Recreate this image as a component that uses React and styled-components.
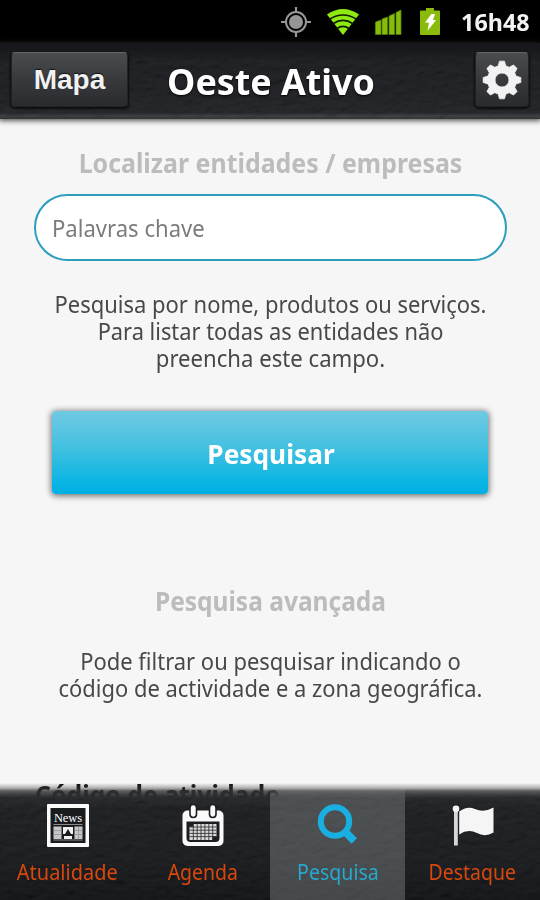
import React from 'react';
import styled, { createGlobalStyle } from 'styled-components';

const GlobalStyle = createGlobalStyle`
  * { box-sizing: border-box; }
  body { margin: 0; background: #f6f6f6; }
  button, input { font: inherit; margin: 0; }
`;

const Screen = styled.div`
  width: 540px;
  height: 900px;
  display: flex;
  flex-direction: column;
  overflow: hidden;
  background: #f6f6f6;
  font-family: 'Noto Sans', 'Open Sans', sans-serif;
`;

/* A single line of text with its glyphs condensed horizontally */
const Line = styled.span`
  display: block;
  white-space: nowrap;
  transform: scaleX(${(p) => p.$fit || 1});
  transform-origin: ${(p) => p.$origin || 'center'};
`;

const StatusBar = styled.div`
  flex: none;
  height: 43px;
  display: flex;
  align-items: center;
  justify-content: flex-end;
  padding: 0 10px 0 0;
  background: #000;
`;

const StatusIcons = styled.div`
  display: flex;
  align-items: center;
  margin-right: 15px;
`;

const Clock = styled.div`
  color: #f4f4f4;
  font-size: 24px;
  font-weight: 700;
  line-height: 44px;
`;

const Header = styled.header`
  position: relative;
  z-index: 2;
  flex: none;
  height: 76px;
  display: grid;
  grid-template-columns: 117px 1fr 54px;
  align-items: start;
  padding: 9px 11px 0;
  background: linear-gradient(#17181c, #1b1c20 70%, #1f2024 92%, #38393b 96%, #2c2d2f);
  box-shadow: 0 1px 5px 1px rgba(50, 50, 45, 0.8);
`;

const Leather = styled.svg`
  position: absolute;
  inset: 0;
  width: 100%;
  height: 100%;
  opacity: ${(p) => p.$strength};
  pointer-events: none;
  mask-image: linear-gradient(transparent 5px, #000 18px);
`;

const HeaderButton = styled.button`
  position: relative;
  height: 55px;
  display: flex;
  align-items: center;
  justify-content: center;
  padding: 0;
  border: 1px solid #222326;
  border-top-color: #646669;
  border-radius: 4px;
  background: linear-gradient(#4b4c50, #38393d 50%, #2a2b2f);
  box-shadow: 0 1px 2px 1px rgba(0, 0, 0, 0.65);
  color: #f1f1f1;
  font-family: 'Liberation Sans', Arial, sans-serif;
  font-size: 28px;
  font-weight: 700;
  line-height: 52px;
  text-shadow: 0 -1px 1px #111;
`;

const Title = styled.h1`
  position: relative;
  margin: 0;
  padding-right: 61px;
  color: #fff;
  font-size: 36px;
  font-weight: 700;
  line-height: 59px;
  text-align: center;
  text-shadow: 0 1px 2px #000;
`;

const Main = styled.main`
  flex: 1;
  min-height: 0;
  overflow: hidden;
  padding-top: 24px;
  text-align: center;
`;

const SectionTitle = styled.h2`
  margin: 0;
  padding-left: 1px;
  color: ${(p) => (p.$dark ? '#111' : '#bbbdbb')};
  font-size: 26px;
  font-weight: 700;
  line-height: 40px;
`;

const SearchField = styled.label`
  display: flex;
  align-items: center;
  height: 67px;
  margin: 11px 33px 0 34px;
  padding: 0 16px;
  border: 2px solid #2b9dbd;
  border-radius: 34px;
  background: #fff;
  color: #7c7c7c;
  font-size: 24px;
  line-height: 64px;
`;

const Hint = styled.p`
  margin: ${(p) => p.$gap}px 0 0;
  padding-left: 1px;
  color: #484848;
  font-size: 24px;
  line-height: 27px;
`;

const SearchButton = styled.button`
  display: block;
  width: 436px;
  height: 83px;
  margin: 40px auto 0 52px;
  padding: 0 0 0 2px;
  border: 0;
  border-radius: 4px;
  background: linear-gradient(#70c9e3, #42c0e0 45%, #07b4e3 88%, #02afe4);
  box-shadow: 0 1px 6px 1px rgba(0, 0, 0, 0.55);
  color: #fff;
  font-size: 26px;
  font-weight: 700;
  line-height: 87px;
`;

const AdvancedTitle = styled(SectionTitle)`
  margin-top: 87px;
`;

const ActivityTitle = styled(SectionTitle)`
  margin: 74px 0 0 34px;
  text-align: left;
`;

/* Overlaps the end of the scrolled content with a soft translucent edge */
const TabBar = styled.nav`
  position: relative;
  z-index: 2;
  flex: none;
  height: 117px;
  margin-top: -14px;
  display: grid;
  grid-template-columns: repeat(4, 135px);
  background: linear-gradient(rgba(20,20,20,0), rgba(70,70,70,.4) 5px, rgba(50,51,54,.8) 8px, rgba(41,42,45,.93) 12px, #232427 15px, #1a1b1e 25px, #17181b 65%, #0f1013);
`;

const Tab = styled.button`
  position: relative;
  display: flex;
  flex-direction: column;
  align-items: center;
  padding: 21px 0 0;
  border: 0;
  background: ${(p) =>
    p.$active
      ? 'linear-gradient(rgba(215,228,225,0) 4px, rgba(215,228,225,.2) 14px, rgba(215,228,225,.235) 28px)'
      : 'none'};
  color: ${(p) => (p.$active ? '#27a8cf' : '#d8480c')};
  font-size: 21.5px;
  line-height: 32px;

  svg { display: block; margin-bottom: 9px; }
`;

const LeatherTexture = ({ id, strength }) => (
  <Leather $strength={strength} aria-hidden="true">
    <filter id={id} x="0" y="0" width="100%" height="100%">
      <feTurbulence type="fractalNoise" baseFrequency="0.09 0.15" numOctaves="2" seed="8" />
      <feDiffuseLighting lightingColor="#fff" surfaceScale="2">
        <feDistantLight azimuth="65" elevation="30" />
      </feDiffuseLighting>
    </filter>
    <rect width="100%" height="100%" filter={`url(#${id})`} />
  </Leather>
);

const gearPath = (() => {
  const pts = [];
  for (let i = 0; i < 8; i++) {
    const a = (i * Math.PI) / 4;
    [[-0.27, 14.6], [-0.13, 19], [0.13, 19], [0.27, 14.6]].forEach(([d, r]) => {
      pts.push(`${(20 + r * Math.sin(a + d)).toFixed(2)} ${(20 - r * Math.cos(a + d)).toFixed(2)}`);
    });
  }
  return `M${pts.join('L')}ZM20 13a7 7 0 1 0 0 14a7 7 0 1 0 0-14Z`;
})();

const GearIcon = () => (
  <svg width="40" height="40" viewBox="0 0 40 40">
    <path d={gearPath} fill="#f2f2f2" stroke="#f2f2f2" strokeWidth="0.8" strokeLinejoin="round" fillRule="evenodd" />
  </svg>
);

const StatusGlyphs = () => (
  <svg width="164" height="36" viewBox="280 4 164 36">
    <g stroke="#969696" fill="none">
      <circle cx="296" cy="22" r="10" strokeWidth="2" />
      <path d="M296 7v6M296 31v6M281 22h6M305 22h6" strokeWidth="2.2" />
      <circle cx="296" cy="22" r="7" fill="#969696" stroke="none" />
    </g>
    <path d="M327 14.500Q343 3.500 359 14.500L343 35Z" fill="#8eea10" />
    <g fill="none" stroke="#101c02" strokeWidth="1.700">
      <path d="M329.500 19.200Q343 10.800 356.500 19.200" />
      <path d="M333 23.700Q343 17.200 353 23.700" />
      <path d="M337 28.500Q343 24.200 349 28.500" />
    </g>
    <g fill="#86bd0a" stroke="#577e08" strokeWidth=".8">
      <path d="M375.400 22L381 20V34.500H375.400ZM382 19L387.500 17V34.500H382ZM389 16L394.500 13.500V34.500H389ZM396 12.500L401 10V34.500H396Z" />
    </g>
    <path d="M426 8h8v2.500h5q1 0 1 1V34q0 1-1 1H421q-1 0-1-1V11.500q0-1 1-1h5Z" fill="#8aba0c" />
    <path d="M431.500 14H435l-2 6 3 .3-8.500 10.500 1.500-8-4-.3Z" fill="#fff" />
  </svg>
);

const NewsIcon = () => (
  <svg width="42" height="43" viewBox="0 0 42 43">
    <rect width="42" height="43" rx="1" fill="#fafafa" />
    <rect x="3.500" y="4" width="35" height="35" fill="#191b1f" />
    <text x="21" y="18" textAnchor="middle" textLength="28" fontFamily="Liberation Serif, serif" fontSize="12.500" fill="#fff">News</text>
    <path d="M6.500 20.500H35.500M6.500 36H35.500" stroke="#8a8b8c" strokeWidth="1" />
    <g fill="#c6c6c6">
      <rect x="6.500" y="22.500" width="8" height="12.500" />
      <rect x="27.500" y="22.500" width="8" height="12.500" />
    </g>
    <path d="M6.500 26.500h8M6.500 30.500h8M27.500 26.500h8M27.500 30.500h8M31.500 22.500v12.500" stroke="#8b8d90" strokeWidth=".7" />
    <path d="M16 23h10v7h-2l-3-5-3 5h-2ZM17 32h8v3h-8Z" fill="#f0f0f0" />
  </svg>
);

const CalendarIcon = () => (
  <svg width="42" height="43" viewBox="0 0 42 43">
    <rect x=".5" y="6.500" width="41" height="35.500" rx="5" fill="#fafafa" />
    <path d="M4.500 17.500h33V34q0 4-4 4H8.500q-4 0-4-4Z" fill="#1b1d21" />
    <g fill="#fafafa" stroke="#1b1d21" strokeWidth="1.600">
      <rect x="8" y=".5" width="6.500" height="13" rx="3.200" />
      <rect x="27.500" y=".5" width="6.500" height="13" rx="3.200" />
    </g>
    <rect x="7.500" y="20" width="27" height="16" fill="#d9d9d9" />
    <path d="M7.500 23h27M7.500 26.200h27M7.500 29.400h27M7.500 32.600h27M11.300 20v16M15.200 20v16M19 20v16M22.900 20v16M26.800 20v16M30.700 20v16" stroke="#242629" strokeWidth=".8" />
    <path d="M7 19.500h4.300v3.300H7ZM30.500 32.600h5V37h-5Z" fill="#1b1d21" />
  </svg>
);

const SearchIcon = () => (
  <svg width="42" height="43" viewBox="0 0 42 43">
    <circle cx="18" cy="17.500" r="14.200" fill="none" stroke="#19afe0" strokeWidth="6" />
    <path d="M27 26.500L37.300 37" stroke="#19afe0" strokeWidth="7.500" />
  </svg>
);

const FlagIcon = () => (
  <svg width="42" height="43" viewBox="0 0 42 43">
    <path d="M2 5.500h3.800V41.500H2Z" fill="#d7d7d7" />
    <circle cx="4" cy="4.700" r="3.300" fill="#f4f4f4" />
    <path d="M7.200 7.500Q15 1.500 23 5Q32 9 41.500 3.500V28.500Q33 33.500 25 29Q16 24.500 7.200 30.500Z" fill="#f5f5f5" />
  </svg>
);

const TABS = [
  { label: 'Atualidade', Icon: NewsIcon, fit: 0.93 },
  { label: 'Agenda', Icon: CalendarIcon, fit: 0.905 },
  { label: 'Pesquisa', Icon: SearchIcon, fit: 0.91, active: true },
  { label: 'Destaque', Icon: FlagIcon, fit: 0.905 },
];

export default function App() {
  return (
    <Screen>
      <GlobalStyle />
      <StatusBar>
        <StatusIcons><StatusGlyphs /></StatusIcons>
        <Clock><Line $fit={0.97} $origin="right">16h48</Line></Clock>
      </StatusBar>
      <Header>
        <LeatherTexture id="leather-top" strength={0.05} />
        <HeaderButton><Line>Mapa</Line></HeaderButton>
        <Title><Line $fit={0.995}>Oeste Ativo</Line></Title>
        <HeaderButton aria-label="Definições"><GearIcon /></HeaderButton>
      </Header>
      <Main>
        <SectionTitle><Line $fit={0.958}>Localizar entidades / empresas</Line></SectionTitle>
        <SearchField><Line $fit={0.92} $origin="left">Palavras chave</Line></SearchField>
        <Hint $gap={29}>
          <Line $fit={0.915}>Pesquisa por nome, produtos ou serviços.</Line>
          <Line $fit={0.91}>Para listar todas as entidades não</Line>
          <Line $fit={0.922}>preencha este campo.</Line>
        </Hint>
        <SearchButton><Line $fit={1.01}>Pesquisar</Line></SearchButton>
        <AdvancedTitle><Line $fit={0.943}>Pesquisa avançada</Line></AdvancedTitle>
        <Hint $gap={26}>
          <Line $fit={0.915}>Pode filtrar ou pesquisar indicando o</Line>
          <Line $fit={0.913}>código de actividade e a zona geográfica.</Line>
        </Hint>
        <ActivityTitle $dark><Line $fit={0.955} $origin="left">Código de atividade</Line></ActivityTitle>
      </Main>
      <TabBar>
        <LeatherTexture id="leather-bottom" strength={0.05} />
        {TABS.map(({ label, Icon, fit, active }) => (
          <Tab key={label} $active={active}>
            <Icon />
            <Line $fit={fit}>{label}</Line>
          </Tab>
        ))}
      </TabBar>
    </Screen>
  );
}
